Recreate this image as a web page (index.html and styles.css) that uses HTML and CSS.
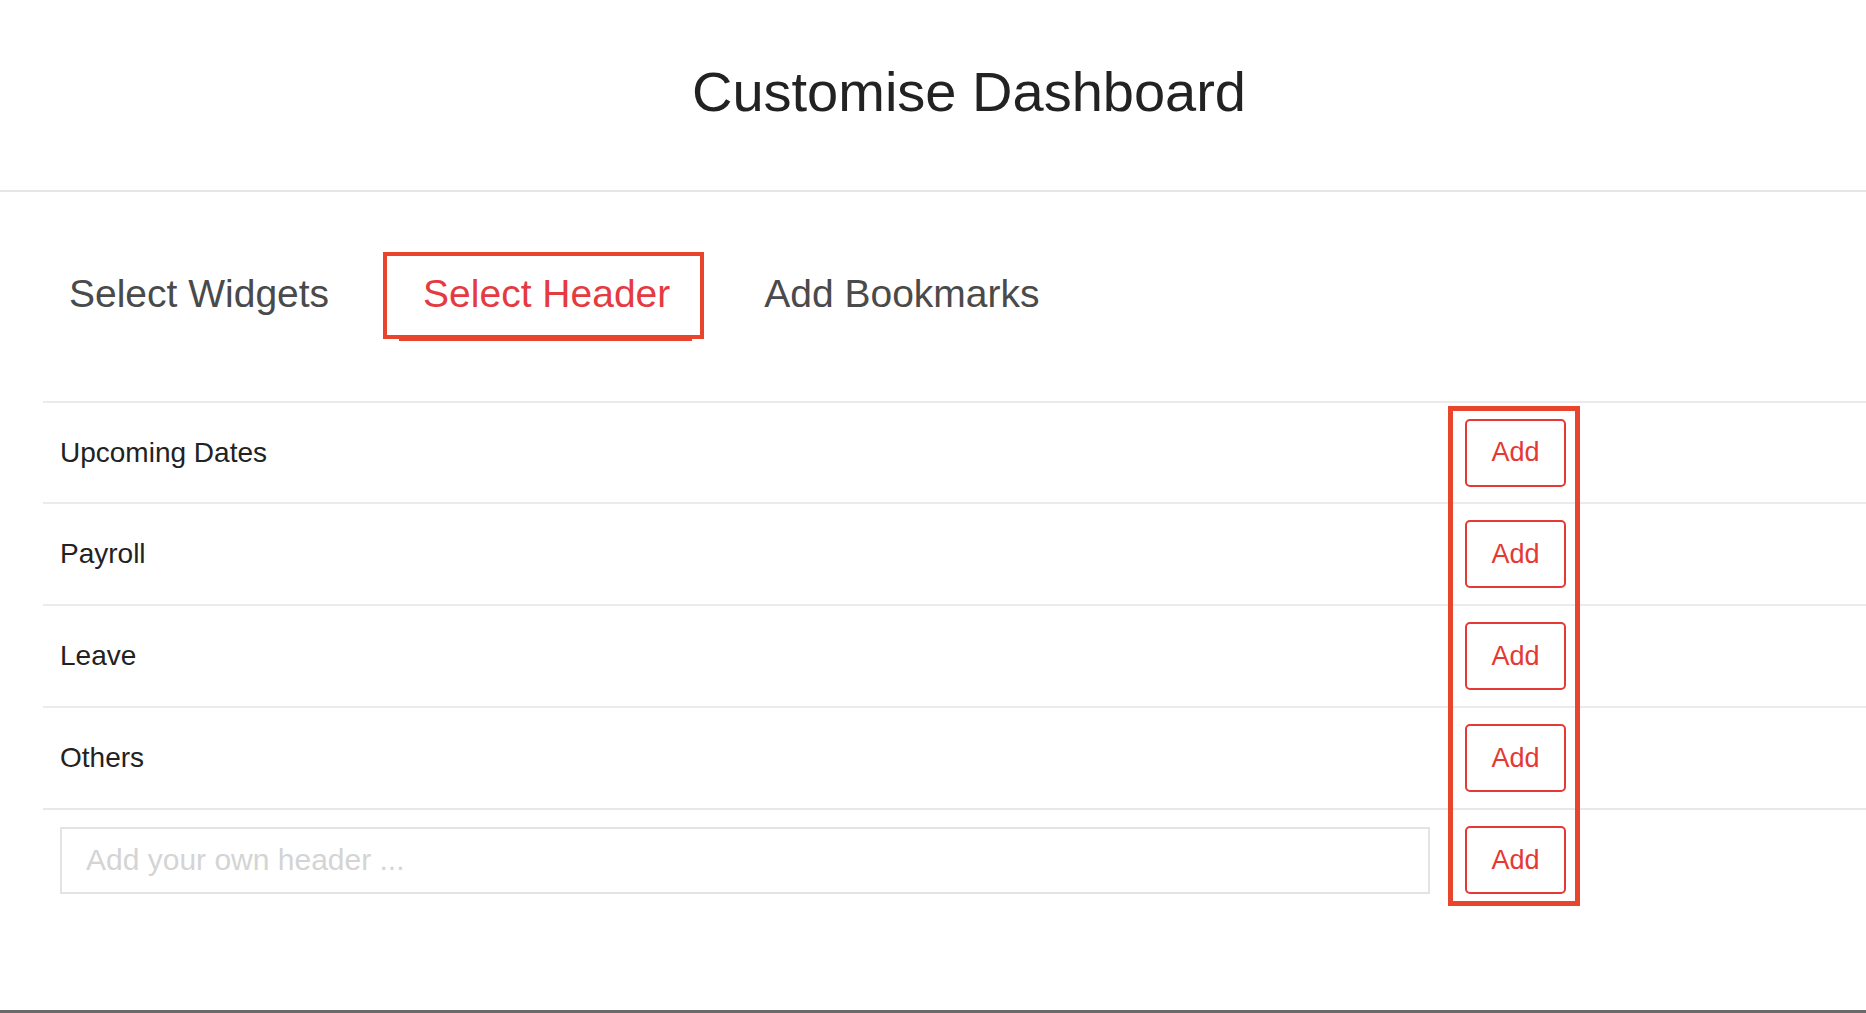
FILE: index.html
```html
<!DOCTYPE html>
<html lang="en">
<head>
<meta charset="utf-8">
<title>Customise Dashboard</title>
<link rel="stylesheet" href="styles.css">
</head>
<body>
<div class="page">
  <header class="header">
    <h1 class="title">Customise Dashboard</h1>
  </header>

  <nav class="tabs">
    <div class="tab">Select Widgets</div>
    <div class="tab tab-active">
      <span class="tab-label">Select Header</span>
      <span class="tab-mark"></span>
      <span class="tab-underline"></span>
    </div>
    <div class="tab">Add Bookmarks</div>
  </nav>

  <section class="list">
    <div class="row">
      <div class="cell-name">Upcoming Dates</div>
      <div class="cell-action"><button class="btn-add">Add</button></div>
    </div>
    <div class="row">
      <div class="cell-name">Payroll</div>
      <div class="cell-action"><button class="btn-add">Add</button></div>
    </div>
    <div class="row">
      <div class="cell-name">Leave</div>
      <div class="cell-action"><button class="btn-add">Add</button></div>
    </div>
    <div class="row">
      <div class="cell-name">Others</div>
      <div class="cell-action"><button class="btn-add">Add</button></div>
    </div>
    <div class="row row-input">
      <div class="cell-input"><input class="header-input" type="text" placeholder="Add your own header ..."></div>
      <div class="cell-action"><button class="btn-add">Add</button></div>
    </div>
    <div class="list-mark"></div>
  </section>

  <div class="bottom-bar"></div>
</div>
</body>
</html>
```

FILE: styles.css
```css
* {
  box-sizing: border-box;
}

html, body {
  margin: 0;
  padding: 0;
  background: #ffffff;
  overflow: hidden;
}

body {
  font-family: "Liberation Sans", Arial, Helvetica, sans-serif;
  color: #222222;
}

.page {
  min-height: 100vh;
  display: flex;
  flex-direction: column;
}

.header {
  padding: 60px 0 66px 72px;
  border-bottom: 2px solid #e6e6e6;
  text-align: center;
}

.title {
  margin: 0;
  font-size: 56px;
  line-height: 64px;
  font-weight: 400;
  color: #222222;
}

.tabs {
  display: flex;
  margin: 60px 0 0 22px;
}

.tab {
  position: relative;
  padding: 20px 47px 23px;
  font-size: 39px;
  line-height: 44px;
  color: #4a4a4a;
}

.tab-active .tab-label {
  color: #e53a3f;
}

.tab-mark {
  position: absolute;
  left: 7px;
  top: 0;
  width: 321px;
  height: 87px;
  border: 4px solid #e8452c;
}

.tab-underline {
  position: absolute;
  left: 23px;
  width: 293px;
  top: 85px;
  height: 4px;
  background: #e8452c;
}

.list {
  position: relative;
  margin: 62px 0 0 43px;
}

.row {
  display: grid;
  grid-template-columns: 1405px 132px 1fr;
  align-items: center;
  height: 102px;
  border-top: 2px solid #ebebeb;
}

.row:first-child {
  height: 101px;
}

.row > .cell-action {
  grid-column: 2;
}

.cell-name {
  padding-left: 17px;
  font-size: 28px;
  color: #222222;
}

.cell-action {
  padding-left: 17px;
}

.btn-add {
  display: block;
  width: 101px;
  height: 68px;
  padding: 0;
  border: 2px solid #e53935;
  border-radius: 5px;
  background: #ffffff;
  color: #e53935;
  font-family: "Liberation Sans", Arial, Helvetica, sans-serif;
  font-size: 27px;
}

.row-input {
  height: auto;
  padding: 16px 0 14px;
  border-top-color: #e6e9ec;
}

.cell-input {
  padding: 0 18px 0 17px;
}

.header-input {
  display: block;
  width: 100%;
  height: 67px;
  padding: 0 24px;
  border: 2px solid #e3e3e3;
  border-radius: 0;
  font-family: "Liberation Sans", Arial, Helvetica, sans-serif;
  font-size: 30px;
  color: #222222;
  outline: none;
}

.header-input::placeholder {
  color: #d4d4d4;
}

.list-mark {
  position: absolute;
  left: 1405px;
  top: 5px;
  width: 132px;
  height: 500px;
  border: 5px solid #e8452c;
}

.bottom-bar {
  margin-top: auto;
  height: 3px;
  background: #6a6a6a;
}
```
